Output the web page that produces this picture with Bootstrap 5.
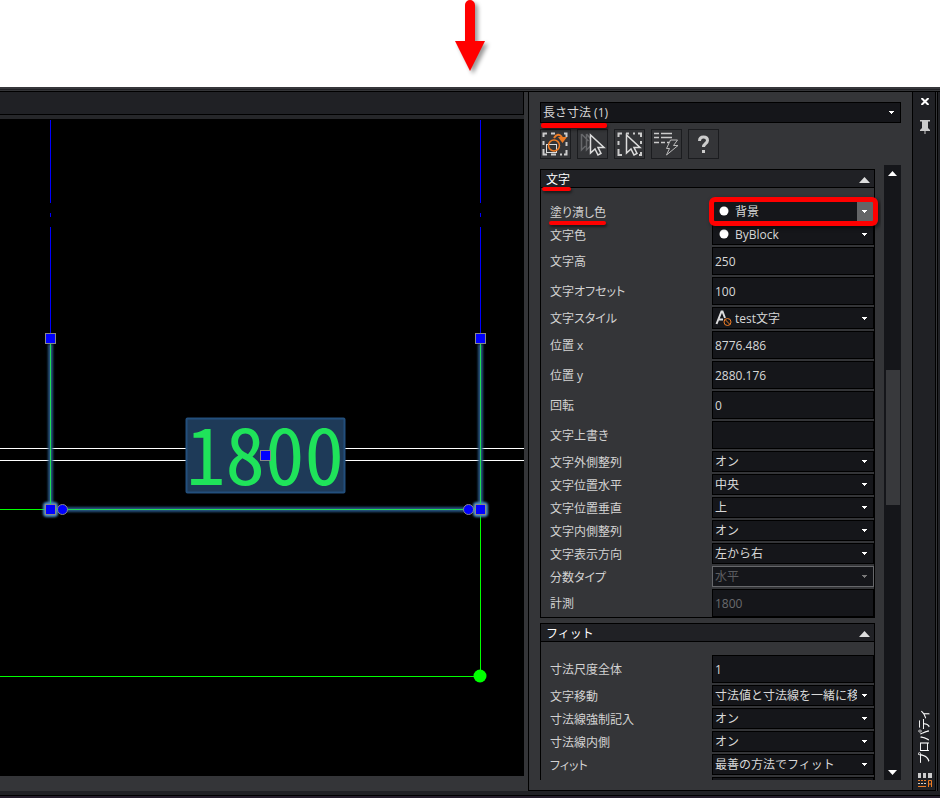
<!DOCTYPE html>
<html lang="ja">
<head>
<meta charset="utf-8">
<meta name="viewport" content="width=device-width, initial-scale=1">
<title>プロパティ</title>
<link href="https://cdn.jsdelivr.net/npm/bootstrap@5.3.0/dist/css/bootstrap.min.css" rel="stylesheet">
<style>
body{font-family:"Open Sans","Noto Sans CJK JP",sans-serif;font-size:12px;line-height:16px;font-feature-settings:"palt";color:#d2d2d2;background:#fff}
.intro{height:87px}
.workspace{background:#202125;min-height:0;border-top:2px solid #36373b}
.frame{background:#343538;min-height:0;border-top:1px solid #343538;margin-top:1px}
.panes{border-top:1px solid #000;min-height:0}
.canvas-pane{min-width:0}
.tabbar{height:23px;background:#202125;border-bottom:1px solid #000;border-right:1px solid #000}
.tabbar-gap{height:4px;background:#26272a}
.model{background:#000;min-height:0;margin-bottom:15px;overflow:hidden}
.dim-text{font-family:"Noto Sans CJK JP",sans-serif;font-size:79px;font-feature-settings:"hwid";fill:#1fe35a}
.divider{width:4px}
.props{width:385px;border:solid #000;border-width:0 1px 1px;padding:10px 11px}
.props-list{min-height:0}
.tools{gap:6px;margin:6px 0}
.scroller{overflow:hidden;padding:4px 6px 0 0;min-width:0}
.side{width:23px;padding-left:1px;background:#202125;border-right:1px solid #000;border-bottom:1px solid #000}
.edge{width:4px;background:#202125;border-left:1px solid #343538;box-shadow:inset 1px 0 #000}
.statusline{height:7px;background:linear-gradient(#202125 4px,#000 4px 5px,#241d2b 5px)}
.field{height:21px;width:100%;border:1px solid #000;border-radius:0;background-color:#15161a;color:#d8d8d8;padding:0 16px 0 2px;font-size:12px;line-height:19px;outline:0}
select.field{appearance:none;background-image:url("data:image/svg+xml,%3Csvg xmlns='http://www.w3.org/2000/svg' width='5' height='3'%3E%3Cpath d='M0 0h5v1H4v1H3v1H2V2H1V1H0z' fill='%23fff'/%3E%3C/svg%3E");background-repeat:no-repeat;background-position:right 6px center;text-overflow:clip}
input.field{height:28px;line-height:26px;padding-right:2px}
select.iconed{padding-left:22px}
select.tall{height:22px}
select.field:disabled{border-color:#66676a;color:#5c5d60;opacity:1;background-image:url("data:image/svg+xml,%3Csvg xmlns='http://www.w3.org/2000/svg' width='5' height='3'%3E%3Cpath d='M0 0h5v1H4v1H3v1H2V2H1V1H0z' fill='%23777'/%3E%3C/svg%3E")}
input.field:disabled{color:#6a6b6e}
.tool{width:31px;height:30px;border:1px solid #1b1c1f;background:#343538;padding:0}
.tool svg{display:block}
.group-box{border:1px solid #000;margin-bottom:5px}
.group-box header{border-bottom:1px solid #000}
.group-toggle{height:17px;background:#202125;border:0;color:#fff;padding:2px 4px 0 5px;font-size:12px;line-height:16px}
.group-body{padding-top:13px}
.prop{margin-bottom:2px}
.prop:last-child{margin-bottom:0}
.prop label{padding-left:9px;padding-top:2px}
.value{width:162px}
.glyph{position:absolute;left:3px;top:3px;pointer-events:none}
.marked::after{content:"";position:absolute;left:-1px;right:0;bottom:-4px;height:4px;border-radius:2px;background:red;box-shadow:1px 2px 3px #0008;z-index:2}
.group-toggle .marked::after{left:-4px;right:-1px;bottom:-3px}
.mark-combo{position:absolute;left:1px;top:21px;width:66px;height:5px;border-radius:2px;background:red;box-shadow:1px 2px 3px #0008}
.boxed::after{content:"";position:absolute;inset:-4px -4px -4px -3px;border:5px solid red;border-radius:6px;box-shadow:2px 2px 4px #0008;z-index:3;pointer-events:none}
.boxed select.field{background-image:url("data:image/svg+xml,%3Csvg xmlns='http://www.w3.org/2000/svg' width='16' height='19'%3E%3Cpath d='M0 0h16v19H0z' fill='%23646567'/%3E%3Cpath d='M5 8h5v1H9v1H8v1H7v-1H6V9H5z' fill='%23fff'/%3E%3C/svg%3E");background-position:right center}
.track{width:17px;background:#15161a;padding:6px 1px 5px 2px;margin-left:3px}
.thumb{height:135px;background:#38393c}
.plain{background:none;border:0;padding:0;line-height:0}
.track .plain{text-align:left;padding-left:2px}
.close-btn{margin-top:6px}
.pin-btn{margin-top:15px}
.vtitle{writing-mode:vertical-rl;text-orientation:sideways;transform:rotate(180deg);color:#fff;margin-bottom:10px}
.side-icon{margin-bottom:2px}
.above{flex:194}
.below{flex:264}
</style>
<script src="https://cdn.jsdelivr.net/npm/bootstrap@5.3.0/dist/js/bootstrap.bundle.min.js"></script>
</head>
<body class="vh-100 d-flex flex-column overflow-hidden">
<div class="intro d-flex justify-content-center flex-shrink-0">
<svg width="60" height="87" viewBox="0 0 60 87" aria-hidden="true"><path d="M25 5a5 5 0 0 1 10 0v36h10L30 71 15 41h10z" fill="red" style="filter:drop-shadow(3px 3px 2px #0006)"/></svg>
</div>
<div class="workspace flex-fill d-flex flex-column">
<div class="frame flex-fill d-flex flex-column">
<div class="panes flex-fill d-flex">
<main class="canvas-pane flex-fill d-flex flex-column">
<div class="tabbar flex-shrink-0"></div>
<div class="tabbar-gap flex-shrink-0"></div>
<div class="model flex-fill">
<svg width="524" height="656" viewBox="0 119 524 656" role="img" aria-label="図面">
<defs><filter id="glow" x="-10%" y="-10%" width="120%" height="120%"><feGaussianBlur stdDeviation="1"/></filter></defs>
<g stroke="#00f"><path d="M50.5 120v83m0 10v4m0 10v112M480.500 120v83m0 10v4m0 10v112"/></g>
<g stroke="#fff"><path d="M0 448.500h524M0 460.500h524"/></g>
<g stroke="#0f0"><path d="M0 509.500h50M480.500 515v161M0 676.500h480"/></g>
<circle cx="480" cy="676" r="6.500" fill="#0f0"/>
<g stroke="#25527f" stroke-width="5" filter="url(#glow)"><path d="M50.500 344v165.500h430V344" fill="none"/></g>
<g fill="#4a8dc8" filter="url(#glow)"><rect x="43" y="502" width="15" height="15" rx="4"/><rect x="473" y="502" width="15" height="15" rx="4"/></g>
<path d="M50.500 344v165.500h430V344" fill="none" stroke="#1fdf55"/>
<rect x="186.500" y="418.500" width="158" height="74" fill="#1e3a58" stroke="#234f7c" stroke-width="2" rx="1"/>
<text class="dim-text" x="186" y="485">1800</text>
<g fill="#00f" stroke="#888"><rect x="45.500" y="333.500" width="10" height="10"/><rect x="475.500" y="333.500" width="10" height="10"/><rect x="45.500" y="504.500" width="10" height="10"/><rect x="475.500" y="504.500" width="10" height="10"/><rect x="260.500" y="450.500" width="10" height="10"/><circle cx="62.500" cy="509.500" r="5"/><circle cx="468.500" cy="509.500" r="5"/></g>
</svg>
</div>
</main>
<div class="divider flex-shrink-0"></div>
<section class="props flex-shrink-0 d-flex flex-column">
<div class="position-relative flex-shrink-0">
<select class="field d-block" aria-label="選択"><option>長さ寸法 (1)</option></select>
<span class="mark-combo"></span>
</div>
<div class="tools d-flex flex-shrink-0">
<button class="tool" aria-label="選択の切替"><svg width="29" height="28" fill="none"><path d="M2.500 7V3.500H6M10 3.500h4M23 3.500h2.500V7M2.500 11v4M25.500 12v4M2.500 19v5.500H6M10 24.500h5M19 24.500h2M23 24.500h2.500V20" stroke="#ccc" stroke-width="2"/><rect x="5.500" y="14.500" width="10" height="8" stroke="#ddd"/><circle cx="13" cy="15.500" r="5.500" stroke="#ee7c25" stroke-width="1.500"/><path d="M13 8q4-6 8-1" stroke="#ee7c25" stroke-width="2"/><path d="M17 7h9l-4.500 6z" fill="#ee7c25"/></svg></button>
<button class="tool" aria-label="追加選択"><svg width="29" height="28" fill="none"><path d="M3.500 4v16l4-4M3.500 4l7 7M8.500 4v16l4-4M8.500 4l6 7" stroke="#66676a" stroke-width="1.500"/><path d="M12.500 5v18l4.500-4 3 6 3-1.500-3-6h6z" fill="#343538" stroke="#ddd" stroke-width="1.500"/></svg></button>
<button class="tool" aria-label="オブジェクト選択"><svg width="29" height="28" fill="none"><path d="M7 3.500H3.500V7M11 3.500h3M18 3.500h2M23 3.500h3V7M3.500 11v4M3.500 19v6H7M26 11v3M26 22v3h-2" stroke="#ccc" stroke-width="2"/><path d="M11.500 5v18l4.500-4 3 6 3-1.500-3-6h6z" fill="#343538" stroke="#ddd" stroke-width="1.500"/></svg></button>
<button class="tool" aria-label="クイック選択"><svg width="29" height="28" fill="none"><path d="M2 3.500h5m2 0h11M2 7.500h5m2 0h11M2 12.500h5m2 0h4m2 0h2" stroke="#ccc" stroke-width="1.500"/><path d="M18.500 10h7l-4 5.500h4.500L14.500 25l3-6.500h-3z" stroke="#bbb"/></svg></button>
<button class="tool" aria-label="ヘルプ"><svg width="29" height="28" fill="none"><path d="M10.500 11q0-4 4-4t4 3.500c0 3-4 3-4 6.500" stroke="#ccc" stroke-width="3"/><path d="M13 20h3v3h-3z" fill="#ccc"/></svg></button>
</div>
<div class="props-list d-flex flex-fill">
<div class="scroller flex-fill">
<section class="group-box">
<header><button class="group-toggle w-100 d-flex justify-content-between align-items-center"><span class="position-relative marked">文字</span><svg width="11" height="6"><path d="M5.500 0 11 6H0z" fill="#ddd"/></svg></button></header>
<div class="group-body">
<div class="prop d-flex align-items-center"><label class="flex-fill" for="p1"><span class="position-relative marked">塗り潰し色</span></label><div class="value position-relative boxed"><select id="p1" class="field iconed d-block"><option>背景</option></select><svg class="glyph" width="18" height="15"><circle cx="9" cy="7" r="4.500" fill="#fff"/></svg></div></div>
<div class="prop d-flex align-items-center"><label class="flex-fill" for="p2">文字色</label><div class="value position-relative"><select id="p2" class="field iconed d-block"><option>ByBlock</option></select><svg class="glyph" width="18" height="15"><circle cx="9" cy="7" r="4.500" fill="#fff"/></svg></div></div>
<div class="prop d-flex align-items-center"><label class="flex-fill" for="p3">文字高</label><div class="value"><input id="p3" class="field d-block" value="250"></div></div>
<div class="prop d-flex align-items-center"><label class="flex-fill" for="p4">文字オフセット</label><div class="value"><input id="p4" class="field d-block" value="100"></div></div>
<div class="prop d-flex align-items-center"><label class="flex-fill" for="p5">文字スタイル</label><div class="value position-relative"><select id="p5" class="field iconed tall d-block"><option>test文字</option></select><svg class="glyph" width="18" height="17" fill="none"><path d="M1.500 14 6.500 1.500h1L10 8M3.500 9.500H8" stroke="#ddd" stroke-width="2"/><circle cx="12.500" cy="12" r="3.500" stroke="#ee7c25"/><path d="m10 9.500 5 5" stroke="#ee7c25"/></svg></div></div>
<div class="prop d-flex align-items-center"><label class="flex-fill" for="p6">位置 x</label><div class="value"><input id="p6" class="field d-block" value="8776.486"></div></div>
<div class="prop d-flex align-items-center"><label class="flex-fill" for="p7">位置 y</label><div class="value"><input id="p7" class="field d-block" value="2880.176"></div></div>
<div class="prop d-flex align-items-center"><label class="flex-fill" for="p8">回転</label><div class="value"><input id="p8" class="field d-block" value="0"></div></div>
<div class="prop d-flex align-items-center"><label class="flex-fill" for="p9">文字上書き</label><div class="value"><input id="p9" class="field d-block" value=""></div></div>
<div class="prop d-flex align-items-center"><label class="flex-fill" for="p10">文字外側整列</label><div class="value"><select id="p10" class="field d-block"><option>オン</option></select></div></div>
<div class="prop d-flex align-items-center"><label class="flex-fill" for="p11">文字位置水平</label><div class="value"><select id="p11" class="field d-block"><option>中央</option></select></div></div>
<div class="prop d-flex align-items-center"><label class="flex-fill" for="p12">文字位置垂直</label><div class="value"><select id="p12" class="field d-block"><option>上</option></select></div></div>
<div class="prop d-flex align-items-center"><label class="flex-fill" for="p13">文字内側整列</label><div class="value"><select id="p13" class="field d-block"><option>オン</option></select></div></div>
<div class="prop d-flex align-items-center"><label class="flex-fill" for="p14">文字表示方向</label><div class="value"><select id="p14" class="field d-block"><option>左から右</option></select></div></div>
<div class="prop d-flex align-items-center"><label class="flex-fill" for="p15">分数タイプ</label><div class="value"><select id="p15" class="field d-block" disabled><option>水平</option></select></div></div>
<div class="prop d-flex align-items-center"><label class="flex-fill" for="p16">計測</label><div class="value"><input id="p16" class="field d-block" value="1800" disabled></div></div>
</div>
</section>
<section class="group-box">
<header><button class="group-toggle w-100 d-flex justify-content-between align-items-center"><span>フィット</span><svg width="11" height="6"><path d="M5.500 0 11 6H0z" fill="#ddd"/></svg></button></header>
<div class="group-body">
<div class="prop d-flex align-items-center"><label class="flex-fill" for="q1">寸法尺度全体</label><div class="value"><input id="q1" class="field d-block" value="1"></div></div>
<div class="prop d-flex align-items-center"><label class="flex-fill" for="q2">文字移動</label><div class="value"><select id="q2" class="field d-block"><option>寸法値と寸法線を一緒に移動</option></select></div></div>
<div class="prop d-flex align-items-center"><label class="flex-fill" for="q3">寸法線強制記入</label><div class="value"><select id="q3" class="field d-block"><option>オン</option></select></div></div>
<div class="prop d-flex align-items-center"><label class="flex-fill" for="q4">寸法線内側</label><div class="value"><select id="q4" class="field d-block"><option>オン</option></select></div></div>
<div class="prop d-flex align-items-center"><label class="flex-fill" for="q5">フィット</label><div class="value"><select id="q5" class="field d-block"><option>最善の方法でフィット</option></select></div></div>
<div class="prop d-flex justify-content-end"><div class="value"><select class="field d-block" aria-label="次の項目"><option></option></select></div></div>
</div>
</section>
</div>
<div class="track flex-shrink-0 d-flex flex-column align-items-stretch">
<button class="plain" aria-label="上へ"><svg width="9" height="5"><path d="M4.500 0 9 5H0z" fill="#fff"/></svg></button>
<div class="above"></div><div class="thumb flex-shrink-0"></div><div class="below"></div>
<button class="plain" aria-label="下へ"><svg width="9" height="5"><path d="M0 0h9L4.500 5z" fill="#fff"/></svg></button>
</div>
</div>
</section>
<aside class="side flex-shrink-0 d-flex flex-column align-items-center">
<button class="plain close-btn" aria-label="閉じる"><svg width="8" height="7"><path d="m.5 0 7 7m0-7-7 7" stroke="#fff" stroke-width="2"/></svg></button>
<button class="plain pin-btn" aria-label="固定"><svg width="10" height="14"><path d="M0 0h10v1.500H8V8l2 2v1H0v-1l2-2V1.500H0zM4.500 11h1v3h-1z" fill="#ccc"/></svg></button>
<span class="vtitle mt-auto">プロパティ</span>
<svg class="side-icon" width="15" height="15" fill="none"><path d="M1 0h3v5H1zM6 0h3v5H6zM11 0h4v5h-4z" fill="#ccc"/><path d="M1 7.500h2m1 0h2m1 0h2M1 13.500h8M11.500 14V7.500h3V14m-3-3h3" stroke="#ee7c25"/><path d="M1 10.500h2m1 0h2m1 0h2" stroke="#ccc"/></svg>
</aside>
<div class="edge flex-shrink-0"></div>
</div>
</div>
<div class="statusline flex-shrink-0"></div>
</div>
</body>
</html>
